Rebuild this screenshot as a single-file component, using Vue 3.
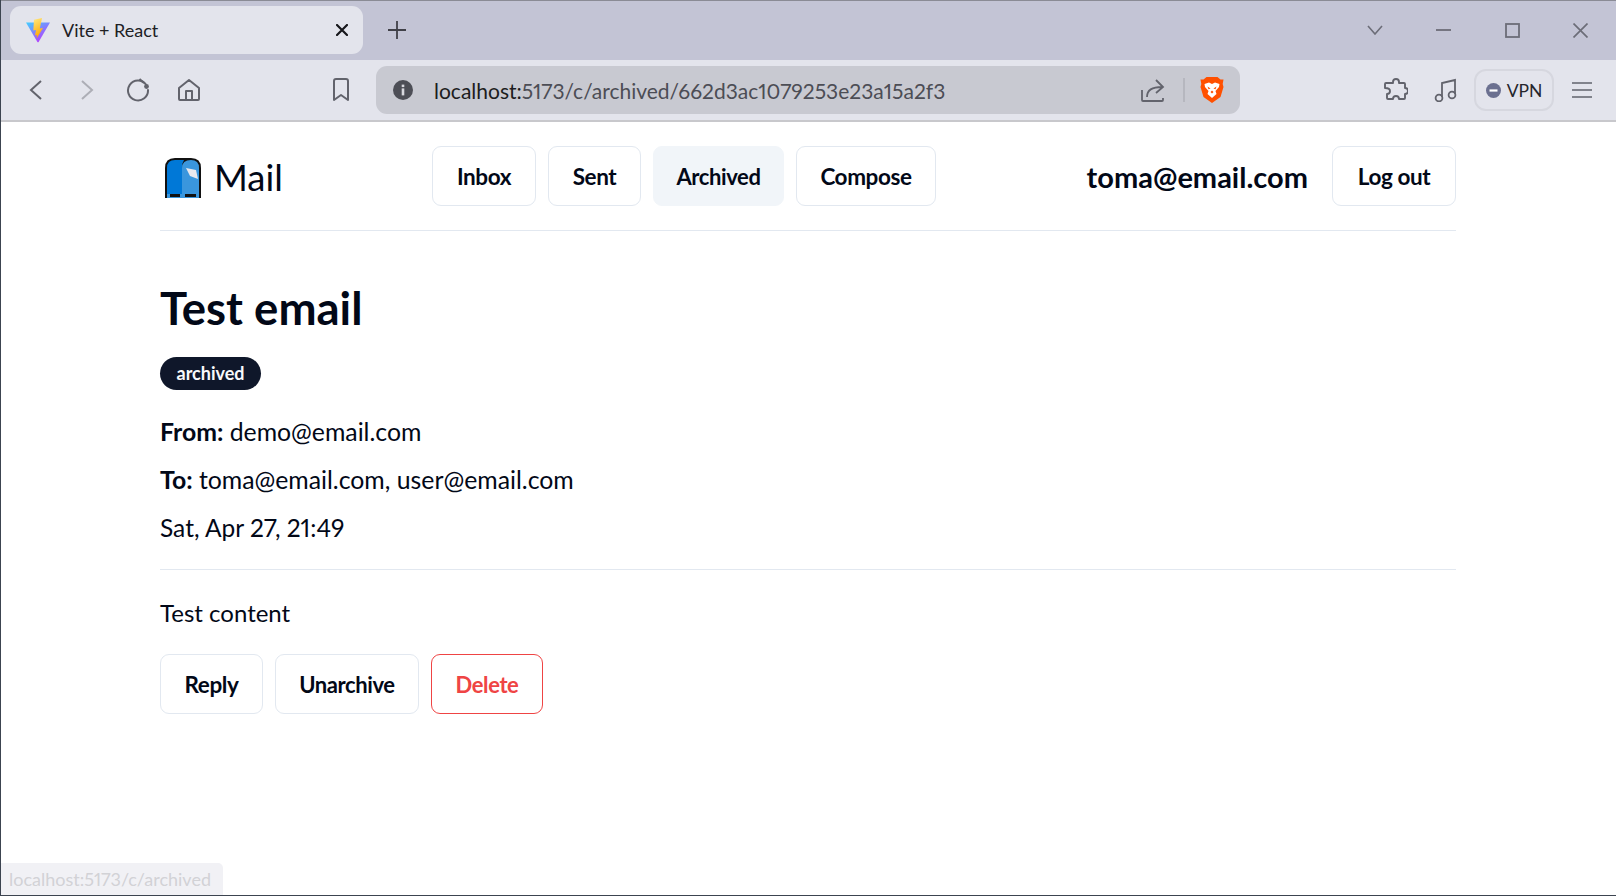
<template>
  <div class="window">
    <div class="tabbar">
      <div class="tab">
        <svg class="favicon" viewBox="0 0 26 26" width="26" height="26">
          <defs>
            <linearGradient id="viteBody" x1="0" y1="0" x2="0.7" y2="1">
              <stop offset="0" stop-color="#41d1ff" />
              <stop offset="1" stop-color="#bd34fe" />
            </linearGradient>
            <linearGradient id="viteBolt" x1="0" y1="0" x2="0.3" y2="1">
              <stop offset="0" stop-color="#ffea83" />
              <stop offset="1" stop-color="#ffa800" />
            </linearGradient>
          </defs>
          <path d="M1 5.5 L25 5.5 L13.6 25 Q13 25.6 12.4 25 Z" fill="url(#viteBody)" />
          <path d="M17 1 L9 2.8 L8.3 13.5 L11 13 L10 18.5 L12 18 L11.6 21.5 L18 11 L14.8 11.6 Z" fill="url(#viteBolt)" />
        </svg>
        <span class="tab-title">Vite + React</span>
        <svg class="tab-close" viewBox="0 0 12 12" width="12" height="12">
          <path d="M1 1 L11 11 M11 1 L1 11" stroke="#17171b" stroke-width="2.2" stroke-linecap="round" />
        </svg>
      </div>
      <svg class="new-tab" viewBox="0 0 18 18" width="18" height="18">
        <path d="M9 0 V18 M0 9 H18" stroke="#404048" stroke-width="1.8" />
      </svg>
      <div class="window-controls">
        <svg viewBox="0 0 16 10" width="16" height="10" class="ctl-chevron">
          <path d="M1 1 L8 9 L15 1" fill="none" stroke="#6c6d78" stroke-width="1.6" />
        </svg>
        <svg viewBox="0 0 16 4" width="16" height="4" class="ctl-min">
          <path d="M0 2 H15" stroke="#6c6d78" stroke-width="1.8" />
        </svg>
        <svg viewBox="0 0 15 15" width="15" height="15" class="ctl-max">
          <rect x="1" y="1" width="13" height="13" fill="none" stroke="#6c6d78" stroke-width="1.8" />
        </svg>
        <svg viewBox="0 0 15 15" width="15" height="15" class="ctl-close">
          <path d="M0.5 0.5 L14.5 14.5 M14.5 0.5 L0.5 14.5" stroke="#6c6d78" stroke-width="1.7" />
        </svg>
      </div>
    </div>

    <div class="toolbar">
      <svg class="tool back" viewBox="0 0 24 24" width="24" height="24">
        <path d="M16 3 L6 12 L16 21" fill="none" stroke="#62636c" stroke-width="2" />
      </svg>
      <svg class="tool forward" viewBox="0 0 24 24" width="24" height="24">
        <path d="M8 3 L18 12 L8 21" fill="none" stroke="#adaeb6" stroke-width="2" />
      </svg>
      <svg class="tool reload" viewBox="0 0 24 24" width="24" height="24">
        <path d="M20 6.5 A10 10 0 1 0 22 12" fill="none" stroke="#62636c" stroke-width="2" stroke-linecap="round" />
        <path d="M13.5 1 L18 5" fill="none" stroke="#62636c" stroke-width="2" />
        <circle cx="20.5" cy="8.5" r="2.4" fill="#62636c" />
      </svg>
      <svg class="tool home" viewBox="0 0 24 24" width="24" height="24">
        <path d="M2 21 V10 L12 2 L22 10 V21 Q22 22 21 22 H3 Q2 22 2 21 Z M9 22 V13 H15 V22" fill="none" stroke="#62636c" stroke-width="2" stroke-linejoin="round" />
      </svg>
      <svg class="tool bookmark" viewBox="0 0 24 24" width="24" height="24">
        <path d="M5 3 Q5 1 7 1 H17 Q19 1 19 3 V22 L12 17 L5 22 Z" fill="none" stroke="#62636c" stroke-width="2" stroke-linejoin="round" />
      </svg>
      <div class="urlbar">
        <svg class="info" viewBox="0 0 20 20" width="20" height="20">
          <circle cx="10" cy="10" r="10" fill="#4d4e56" />
          <rect x="8.7" y="8.4" width="2.6" height="7" fill="#d8d8de" />
          <rect x="8.7" y="4.6" width="2.6" height="2.5" fill="#d8d8de" />
        </svg>
        <span class="url"><span class="url-host">localhost:</span>5173/c/archived/662d3ac1079253e23a15a2f3</span>
        <svg class="share" viewBox="0 0 24 24" width="24" height="24">
          <path d="M1 12 V22 Q1 23 2 23 H21 Q22 23 22 22 V20" fill="none" stroke="#62636c" stroke-width="1.8" />
          <path d="M6 19 C6 12 11 9 21 9 M15 2 L22 9 L15 15" fill="none" stroke="#62636c" stroke-width="1.8" />
        </svg>
        <span class="url-sep"></span>
        <svg class="brave" viewBox="0 0 24 28" width="24" height="28">
          <path d="M6.5 1 H17.5 L20.5 3.5 L23.5 3.5 L22.7 8 L23.5 11 L20.5 21 L12 27 L3.5 21 L0.5 11 L1.3 8 L0.5 3.5 L3.5 3.5 Z" fill="#ff5000" />
          <path d="M4.5 8 L9 6.5 L12 8 L15 6.5 L19.5 8 L19 11 L15.5 15 L16.5 18 L12 22 L7.5 18 L8.5 15 L5 11 Z" fill="#fff" />
          <path d="M7.5 10.5 L10.5 12.5 L8.5 13.2 Z M16.5 10.5 L13.5 12.5 L15.5 13.2 Z M10.5 16 L12 14.5 L13.5 16 L12 17.5 Z" fill="#ff5000" />
        </svg>
      </div>
      <svg class="tool puzzle" viewBox="0 0 24 24" width="24" height="24">
        <path d="M9 4 Q9 1 12 1 Q15 1 15 4 V5 H20 Q21 5 21 6 V10 Q24 10 24 13 Q24 16 21 16 V20 Q21 21 20 21 H15 Q15 18 12 18 Q9 18 9 21 H4 Q3 21 3 20 V16 Q6 16 6 13 Q6 10 1 10 V6 Q1 5 2 5 H9 Z" fill="none" stroke="#62636c" stroke-width="1.9" stroke-linejoin="round" />
      </svg>
      <svg class="tool music" viewBox="0 0 24 24" width="24" height="24">
        <path d="M8 19 V5 L21 2 V16" fill="none" stroke="#62636c" stroke-width="1.8" />
        <circle cx="5" cy="20" r="3.4" fill="none" stroke="#62636c" stroke-width="1.8" />
        <circle cx="18" cy="17" r="3.4" fill="none" stroke="#62636c" stroke-width="1.8" />
      </svg>
      <div class="vpn">
        <svg viewBox="0 0 15 15" width="15" height="15">
          <circle cx="7.5" cy="7.5" r="7.5" fill="#6b7090" />
          <rect x="3.5" y="6.4" width="8" height="2.2" fill="#fff" />
        </svg>
        <span>VPN</span>
      </div>
      <svg class="tool menu" viewBox="0 0 20 16" width="20" height="16">
        <path d="M0 1 H20 M0 8 H20 M0 15 H20" stroke="#62636c" stroke-width="1.7" />
      </svg>
    </div>

    <div class="page">
      <div class="container">
        <nav class="nav">
          <div class="brand">
            <svg class="mailbox" viewBox="0 0 38 42" width="38" height="42">
              <path d="M1 41 V11 Q1 1 11 1 H27 Q37 1 37 11 V41 Z" fill="#111" />
              <path d="M3 37 V11 Q3 3 11 3 H20 Q18 6 18 11 V37 Z" fill="#0078d7" />
              <path d="M18 37 V11 Q18 3 27 3 Q35 3 35 11 V37 Z" fill="#3a96dd" />
              <path d="M22 11 L32 13 L34 22 L26 19 Z" fill="#e8e8ee" />
              <path d="M3 37 H35 V41 H3 Z" fill="#3a96dd" />
              <path d="M6 37 H16 V40 H6 Z M21 37 H32 V40 H21 Z" fill="#111" />
            </svg>
            <span class="brand-name">Mail</span>
          </div>
          <div class="nav-links">
            <button class="btn w-inbox">Inbox</button>
            <button class="btn w-sent">Sent</button>
            <button class="btn active tight w-archived">Archived</button>
            <button class="btn w-compose">Compose</button>
          </div>
          <div class="nav-user">
            <span class="user-email">toma@email.com</span>
            <button class="btn w-logout">Log out</button>
          </div>
        </nav>

        <article class="mail">
          <h1>Test email</h1>
          <span class="badge">archived</span>
          <p class="addr"><strong>From:</strong> demo@email.com</p>
          <p class="addr"><strong>To:</strong> toma@email.com, user@email.com</p>
          <p class="date">Sat, Apr 27, 21:49</p>
          <hr />
          <p class="body-text">Test content</p>
          <div class="actions">
            <button class="btn w-reply">Reply</button>
            <button class="btn tight w-unarchive">Unarchive</button>
            <button class="btn danger tight w-delete">Delete</button>
          </div>
        </article>
      </div>
      <div class="status">localhost:5173/c/archived</div>
    </div>
  </div>
</template>

<script setup>
</script>

<style>
html,
body {
  margin: 0;
  overflow: hidden;
}
</style>

<style scoped>
.window {
  width: 1616px;
  height: 896px;
  box-sizing: border-box;
  display: flex;
  flex-direction: column;
  border-left: 1px solid #3c4450;
  border-bottom: 1px solid #3c4450;
  font-family: Lato, "Noto Sans", sans-serif;
  font-variant-numeric: proportional-nums;
  color: #020817;
  background: #fff;
}

.tabbar {
  height: 60px;
  flex: none;
  box-sizing: border-box;
  border-top: 1px solid #8a8b95;
  background: #c3c4d5;
  display: flex;
  align-items: center;
  padding: 5px 0 6px 9px;
}

.tab {
  width: 353px;
  height: 48px;
  box-sizing: border-box;
  background: #e3e4ec;
  border-radius: 11px;
  display: flex;
  align-items: center;
  padding: 0 15px 0 15px;
}

.favicon {
  margin-right: 11px;
}

.tab-title {
  font-size: 18px;
  color: #202024;
}

.tab-close {
  margin-left: auto;
}

.new-tab {
  margin-left: 25px;
}

.window-controls {
  margin-left: auto;
  display: flex;
  align-items: center;
  position: relative;
  padding-right: 28px;
  gap: 53px;
}

.toolbar {
  height: 62px;
  flex: none;
  box-sizing: border-box;
  background: #e3e4ec;
  border-bottom: 2px solid #c8c8cc;
  display: flex;
  align-items: center;
  padding-left: 24px;
}

.back {
  margin-right: 25px;
}

.forward {
  margin-right: 28px;
}

.reload {
  margin-right: 27px;
}

.home {
  margin-right: 128px;
}

.bookmark {
  margin-right: 23px;
}

.urlbar {
  width: 864px;
  height: 48px;
  box-sizing: border-box;
  border-radius: 11px;
  background: #c8c9d1;
  display: flex;
  align-items: center;
  padding: 0 16px 0 17px;
}

.info {
  margin-right: 21px;
}

.url {
  font-size: 21px;
  color: #4c4d55;
  white-space: nowrap;
}

.url-host {
  color: #1c1c20;
}

.share {
  margin-left: auto;
  margin-right: 18px;
}

.url-sep {
  width: 2px;
  height: 24px;
  background: #b6b7bf;
  margin-right: 15px;
}

.puzzle {
  margin-left: 144px;
}

.music {
  margin-left: 26px;
}

.vpn {
  margin-left: 16px;
  width: 80px;
  height: 42px;
  box-sizing: border-box;
  border: 2px solid #d6d7df;
  border-radius: 12px;
  display: flex;
  align-items: center;
  justify-content: center;
  gap: 6px;
  font-size: 17.5px;
  color: #26262c;
}

.menu {
  margin-left: 18px;
}

.page {
  flex: 1;
  position: relative;
  min-height: 0;
}

.container {
  width: 1296px;
  margin-left: 159px;
}

.nav {
  display: flex;
  align-items: center;
  height: 109px;
  box-sizing: border-box;
  padding-top: 24px;
  padding-bottom: 24px;
  border-bottom: 1px solid #e2e8f0;
}

.brand {
  display: flex;
  align-items: center;
  width: 272px;
  padding-top: 2px;
  padding-left: 4px;
  box-sizing: border-box;
}

.mailbox {
  margin-top: 2px;
}

.brand-name {
  font-size: 36.5px;
  margin-left: 12px;
}

.nav-links {
  display: flex;
  gap: 12px;
}

.nav-user {
  margin-left: auto;
  display: flex;
  align-items: center;
  gap: 24px;
}

.user-email {
  font-size: 29px;
  font-weight: 700;
}

.btn {
  height: 60px;
  box-sizing: border-box;
  padding: 0;
  border: 1px solid #e2e8f0;
  border-radius: 9px;
  background: #fff;
  font-family: inherit;
  font-size: 22.5px;
  letter-spacing: -0.4px;
  font-weight: 700;
  color: #020817;
}

.btn.tight {
  font-size: 22px;
}

.btn.active {
  background: #f1f5f9;
  border-color: #f1f5f9;
}

.btn.danger {
  border-color: #ef4444;
  color: #ef4444;
}

.w-inbox {
  width: 104px;
}

.w-sent {
  width: 93px;
}

.w-archived {
  width: 131px;
}

.w-compose {
  width: 140px;
}

.w-logout {
  width: 124px;
}

.w-reply {
  width: 103px;
}

.w-unarchive {
  width: 144px;
}

.w-delete {
  width: 112px;
}

.mail {
  padding-top: 50px;
}

h1 {
  margin: 0;
  font-size: 45.5px;
  line-height: 54px;
  font-weight: 700;
}

.badge {
  display: inline-block;
  margin-top: 22px;
  height: 33px;
  line-height: 32px;
  padding: 0 16.5px;
  border-radius: 17px;
  background: #0f172a;
  color: #f8fafc;
  font-size: 18px;
  font-weight: 700;
}

p {
  margin: 0;
  font-size: 24px;
  line-height: 36px;
}

p.addr {
  font-size: 24.8px;
}

p.date {
  font-size: 24.5px;
}

.badge + p {
  margin-top: 24px;
}

p + p {
  margin-top: 12px;
}

hr {
  margin: 23px 0 0;
  border: 0;
  border-top: 1px solid #e2e8f0;
}

.body-text {
  margin-top: 25px;
}

.actions {
  display: flex;
  gap: 12px;
  margin-top: 23px;
}

.status {
  position: absolute;
  left: 0;
  bottom: 0;
  width: 222px;
  height: 32px;
  line-height: 33px;
  box-sizing: border-box;
  padding-left: 8px;
  background: #f1f1f5;
  border-top-right-radius: 5px;
  color: #d2d2d6;
  font-size: 18px;
  white-space: nowrap;
}
</style>
